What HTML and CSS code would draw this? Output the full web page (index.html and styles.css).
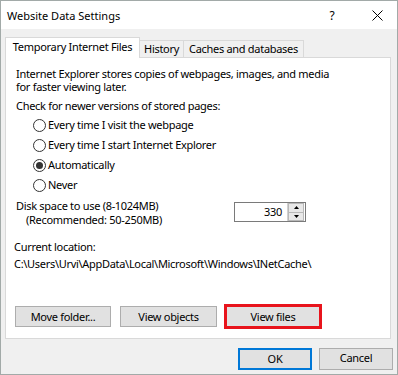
FILE: index.html
```html
<!DOCTYPE html>
<html>
<head>
<meta charset="utf-8">
<link rel="stylesheet" href="styles.css">
</head>
<body>
<div class="window">
  <div class="titlebar">
    <span class="title">Website Data Settings</span>
    <span class="help">?</span>
    <span class="close"><svg width="11" height="11" viewBox="0 0 11 11"><path d="M0.5 0.5 L10.5 10.5 M10.5 0.5 L0.5 10.5" stroke="#000" stroke-width="1" fill="none"/></svg></span>
  </div>
  <div class="main">
    <div class="tabs">
      <div class="tab active">Temporary Internet Files</div>
      <div class="tab history">History</div>
      <div class="tab caches">Caches and databases</div>
    </div>
    <div class="panel">
      <div class="intro">
        <div class="line">Internet Explorer stores copies of webpages, images, and media</div>
        <div class="line">for faster viewing later.</div>
      </div>
      <div class="check line">Check for newer versions of stored pages:</div>
      <div class="radios">
        <div class="radio"><span class="circle"></span>Every time I visit the webpage</div>
        <div class="radio"><span class="circle"></span>Every time I start Internet Explorer</div>
        <div class="radio"><span class="circle checked"><span class="dot"></span></span>Automatically</div>
        <div class="radio"><span class="circle"></span>Never</div>
      </div>
      <div class="disk">
        <div class="disk-text">
          <div>Disk space to use (8-1024MB)</div>
          <div class="rec">(Recommended: 50-250MB)</div>
        </div>
        <div class="spin">
          <span class="spin-val">330</span>
          <span class="spin-btns">
            <span class="spin-btn"><svg width="5" height="3" viewBox="0 0 5 3"><path d="M2.5 0 L5 3 L0 3 Z" fill="#000"/></svg></span>
            <span class="spin-btn"><svg width="5" height="3" viewBox="0 0 5 3"><path d="M0 0 L5 0 L2.5 3 Z" fill="#000"/></svg></span>
          </span>
        </div>
      </div>
      <div class="loc">
        <div>Current location:</div>
        <div>C:\Users\Urvi\AppData\Local\Microsoft\Windows\INetCache\</div>
      </div>
      <div class="actions">
        <button class="btn move">Move folder...</button>
        <button class="btn objects">View objects</button>
        <button class="btn files highlight">View files</button>
      </div>
    </div>
    <div class="footer">
      <button class="btn foot ok">OK</button>
      <button class="btn foot">Cancel</button>
    </div>
  </div>
</div>
</body>
</html>
```

FILE: styles.css
```css
html, body {
  margin: 0;
  padding: 0;
}
body {
  font-family: "Noto Sans", "Liberation Sans", sans-serif;
  font-size: 11px;
  letter-spacing: -0.3px;
  color: #000;
  background: #fff;
}
.window {
  width: 398px;
  height: 375px;
  box-sizing: border-box;
  border: 1px solid #a2aaa8;
  background: #f0f0f0;
  display: flex;
  flex-direction: column;
}
.titlebar {
  height: 28px;
  flex: none;
  background: #fff;
  display: flex;
  align-items: center;
}
.title {
  padding-left: 6px;
  letter-spacing: 0;
}
.help {
  margin-left: auto;
  width: 30px;
  text-align: center;
  font-size: 12px;
}
.close {
  width: 30px;
  margin-left: 15px;
  margin-right: 5px;
  display: flex;
  justify-content: center;
}
.close svg {
  display: block;
}
.main {
  padding: 8px 6px 0 4px;
}
.tabs {
  display: flex;
  align-items: flex-end;
  height: 21px;
  position: relative;
  z-index: 1;
}
.tab {
  box-sizing: border-box;
  border: 1px solid #d9d9d9;
  border-bottom: none;
  background: #f0f0f0;
  text-align: center;
  height: 17px;
  line-height: 16px;
  margin-bottom: 1px;
  white-space: nowrap;
}
.tab.active {
  width: 135px;
  height: 21px;
  margin-bottom: 0;
  background: #fff;
  line-height: 17px;
}
.tab.history {
  width: 44px;
  border-left: none;
}
.tab.caches {
  width: 120px;
  border-left: none;
}
.panel {
  margin-top: -1px;
  width: 386px;
  height: 282px;
  box-sizing: border-box;
  border: 1px solid #d9d9d9;
  background: #fff;
  padding: 0 0 11px 10px;
  display: flex;
  flex-direction: column;
}
.line {
  height: 13px;
  line-height: 13px;
}
.intro {
  margin-top: 9px;
}
.check {
  margin-top: 6px;
}
.radios {
  margin-top: 3px;
}
.radio {
  height: 20px;
  line-height: 20px;
  display: flex;
  align-items: center;
}
.circle {
  width: 13px;
  height: 13px;
  box-sizing: border-box;
  border: 1px solid #333;
  border-radius: 50%;
  margin-left: 17px;
  margin-right: 2px;
  display: flex;
  align-items: center;
  justify-content: center;
  flex: none;
}
.dot {
  width: 7px;
  height: 7px;
  border-radius: 50%;
  background: #333;
}
.disk {
  margin-top: 4px;
  display: flex;
  align-items: flex-start;
}
.disk-text {
  width: 218px;
  line-height: 14px;
}
.rec {
  padding-left: 10px;
}
.spin {
  margin-top: 3px;
  width: 72px;
  height: 20px;
  box-sizing: border-box;
  border: 1px solid #7a7a7a;
  display: flex;
}
.spin-val {
  flex: 1;
  text-align: right;
  padding-right: 5px;
  line-height: 17px;
}
.spin-btns {
  width: 16px;
  margin: 0 1px 0 0;
  display: flex;
  flex-direction: column;
  border-left: 1px solid #d0d0d0;
}
.spin-btn {
  flex: 1;
  background: #e8e8e8;
  border: 1px solid #b8b8b8;
  display: flex;
  align-items: center;
  justify-content: center;
}
.spin-btn + .spin-btn {
  border-top: none;
}
.spin-btn svg {
  display: block;
}
.loc {
  margin-top: 11px;
  margin-left: -2px;
  line-height: 17px;
}
.actions {
  margin-top: auto;
  margin-left: -1px;
  display: flex;
  gap: 9px;
}
.btn {
  font: inherit;
  letter-spacing: inherit;
  color: #000;
  background: #e1e1e1;
  border: 1px solid #adadad;
  box-sizing: border-box;
  padding: 0;
  margin: 0;
  height: 21px;
  line-height: 19px;
  text-align: center;
}
.move {
  width: 96px;
}
.objects {
  width: 97px;
}
.files {
  width: 94px;
}
.highlight {
  outline: 3px solid #e8141c;
  outline-offset: -1px;
}
.footer {
  margin-top: 9px;
  display: flex;
  justify-content: flex-end;
  gap: 7px;
  margin-right: -2px;
}
.foot {
  width: 74px;
  height: 22px;
  line-height: 18px;
  padding-bottom: 2px;
}
.ok {
  border: 2px solid #0078d7;
}
```
